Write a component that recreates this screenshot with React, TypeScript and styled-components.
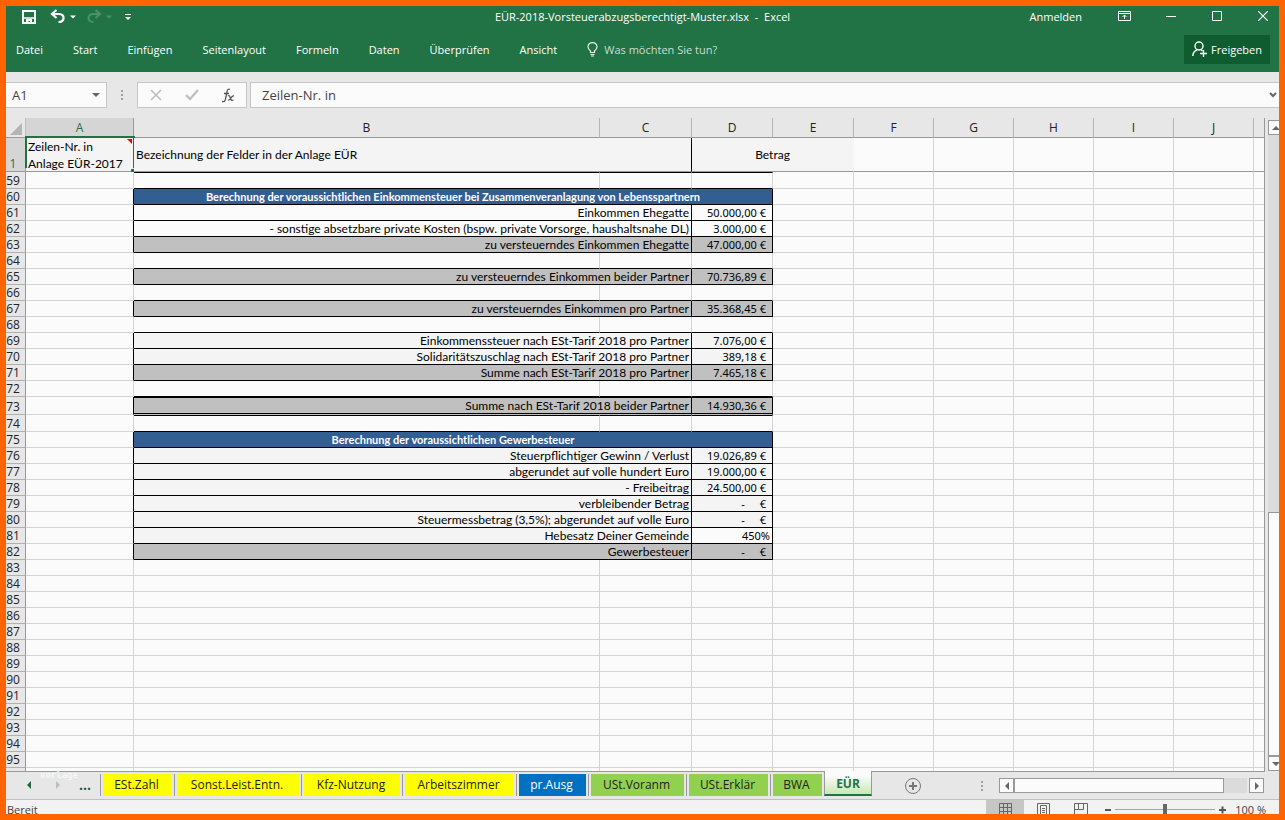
import React from "react";
import styled, { createGlobalStyle } from "styled-components";

const ui = `"Open Sans", "Noto Sans", sans-serif`;
const cellFont = `Lato, "Noto Sans", sans-serif`;
const amountFont = `"Noto Sans", "Open Sans", sans-serif`;
const green = "#217346";

const GlobalStyle = createGlobalStyle`
  * { box-sizing: border-box; }
  body { margin: 0; background: #ff6400; font-family: ${ui}; font-size: 12px; color: #000; }
  button, input { font: inherit; color: inherit; }
  button { border: 0; padding: 0; background: none; }
`;

const Window = styled.div`
  height: 100vh;
  border: 6px solid #ff6400;
  display: flex;
  flex-direction: column;
  overflow: hidden;
  background: #e7e7e7;
`;

/* Title bar and ribbon */
const Ribbon = styled.header`
  background: ${green};
  color: #fff;
  height: 66px;
  flex: none;
  font-size: 11px;
`;
const TitleBar = styled.div`
  display: grid;
  grid-template-columns: 1fr auto 1fr;
  height: 20px;
  align-items: center;
`;
const QuickAccess = styled.div`
  display: flex;
  align-items: center;
  padding: 2px 0 0 15px;
`;
const IconButton = styled.button<{ $gap?: number }>`
  display: flex;
  align-items: center;
  justify-content: center;
  margin-right: ${(p) => p.$gap ?? 0}px;
  svg { display: block; }
`;
const Title = styled.h1`
  margin: 0;
  font-size: 11px;
  font-weight: 400;
  white-space: pre;
`;
const WindowControls = styled.div`
  display: flex;
  justify-content: flex-end;
  align-items: center;
  padding-right: 11px;
`;
const MenuBar = styled.nav`
  display: flex;
  align-items: center;
  height: 46px;
  padding: 0 9px 0 10px;
  gap: 30px;
`;
const MenuItem = styled.button``;
const TellMe = styled.button`
  display: flex;
  align-items: center;
  gap: 6px;
  color: #c9ddd1;
`;
const Share = styled.button`
  margin-left: auto;
  display: flex;
  align-items: center;
  justify-content: center;
  gap: 4px;
  width: 86px;
  height: 29px;
  background: #0e5c2f;
`;

/* Formula bar */
const FormulaRow = styled.div`
  display: flex;
  flex: none;
  height: 46px;
  padding: 10px 0;
  font-size: 13px;
  color: #444;
`;
const FieldBox = styled.div<{ $width?: number }>`
  display: flex;
  align-items: center;
  ${(p) => (p.$width ? `width: ${p.$width}px; flex: none;` : "flex: 1; min-width: 0;")}
  background: #fbfbfb;
  border: 1px solid #c6c6c6;
`;
const NameBox = styled(FieldBox)`
  border-left: 0;
  padding-right: 6px;
`;
const FormulaBox = styled(FieldBox)`
  border-right: 0;
  padding: 0 2px 0 5px;
  margin-left: 3px;
`;
const TextInput = styled.input`
  flex: 1;
  min-width: 0;
  border: 0;
  outline: 0;
  background: none;
  padding: 0 6px;
`;
const Grip = styled.span`
  width: 30px;
  flex: none;
  display: flex;
  align-items: center;
  justify-content: center;
`;
const FormulaActions = styled(FieldBox)`
  justify-content: space-between;
  padding: 0 11px 0 12px;
`;

/* Sheet */
const SheetArea = styled.main`
  flex: 1;
  min-height: 0;
  display: flex;
`;
const GridPane = styled.div`
  flex: 1;
  min-width: 0;
  overflow: hidden;
  margin-right: 3px;
  border-right: 1px solid #999;
  background: #fbfbfb;
`;
const Grid = styled.table`
  width: 100%;
  table-layout: fixed;
  border-collapse: separate;
  border-spacing: 0;
  font-family: ${cellFont};
  font-size: 12px;
  line-height: 14px;
`;
const Col = styled.col<{ $width?: number }>`
  ${(p) => p.$width && `width: ${p.$width}px;`}
`;
const ColumnHead = styled.th<{ $active?: boolean }>`
  height: 20px;
  padding: 0;
  font: 400 12px/18px ${ui};
  color: ${(p) => (p.$active ? green : "#222")};
  background: ${(p) => (p.$active ? "#d5d5d5" : "#e7e7e7")};
  border-bottom: 1px solid #999;
  border-right: 1px solid;
  border-right-color: ${(p) => (p.$active ? "#999" : "#b5b5b5")};
  &:last-child { border-right: 0; }
`;
const Corner = styled.td`
  padding: 0;
  background: #e7e7e7;
  border-right: 1px solid #c0c0c0;
  border-bottom: 1px solid #999;
  svg { display: block; margin: 3px 0 0 4px; }
`;
const RowHead = styled.th<{ $active?: boolean }>`
  padding: 0 5px 0 0;
  font: 400 12px/14px ${ui};
  text-align: center;
  vertical-align: bottom;
  color: ${(p) => (p.$active ? green : "#222")};
  background: ${(p) => (p.$active ? "#d5d5d5" : "#e7e7e7")};
  border-right: 1px solid #999;
  border-bottom: 1px solid ${(p) => (p.$active ? "#999" : "#b0b0b0")};
`;
const Row = styled.tr<{ $height: number }>`
  height: ${(p) => p.$height}px;
`;

type Fill = "plain" | "soft" | "gray" | "blue";
const fills: Record<Fill, string> = {
  plain: "#fbfbfb",
  soft: "#f4f4f4",
  gray: "#c0c0c0",
  blue: "#335e92",
};
const Cell = styled.td<{
  $fill?: Fill;
  $right?: string;
  $bottom?: string;
  $top?: boolean;
  $doubled?: boolean;
  $align?: string;
}>`
  padding: 0 2px;
  white-space: nowrap;
  background: ${(p) => fills[p.$fill ?? "plain"]};
  text-align: ${(p) => p.$align ?? "left"};
  border-right: 1px solid ${(p) => p.$right ?? "#d4d4d4"};
  border-bottom: 1px solid ${(p) => p.$bottom ?? "#d4d4d4"};
  ${(p) => p.$top && "border-top: 1px solid #000;"}
  ${(p) => p.$doubled && "box-shadow: inset 0 -1px #000;"}
  &:last-child { border-right: 0; }
`;
const TitleCell = styled(Cell)`
  color: #fff;
  font-weight: 700;
  font-size: 11px;
`;
const AmountCell = styled(Cell)<{ $flush?: boolean }>`
  font-family: ${amountFont};
  font-size: 11px;
  padding-right: ${(p) => (p.$flush ? 2 : 6)}px;
`;
const Dash = styled.span`
  margin-right: 15px;
`;
const FrozenCell = styled(Cell)`
  position: relative;
  border-bottom-color: #999;
`;
const Wrapped = styled.div`
  height: 33px;
  line-height: 17px;
`;
const Selection = styled.span`
  position: absolute;
  inset: -2px -2px 3px -1px;
  border: 2px solid ${green};
  border-bottom: 0;
  &::before {
    content: "";
    position: absolute;
    right: 1px;
    top: 1px;
    border-top: 5px solid #e00;
    border-left: 5px solid transparent;
  }
  &::after {
    content: "";
    position: absolute;
    right: -3px;
    bottom: -4px;
    width: 5px;
    height: 3px;
    background: ${green};
  }
`;

/* Scroll bars */
const VScroll = styled.div`
  width: 11px;
  flex: none;
  overflow: hidden;
  display: flex;
  flex-direction: column;
  padding-top: 2px;
`;
const ScrollButton = styled.button`
  width: 15px;
  height: 15px;
  flex: none;
  display: flex;
  align-items: center;
  justify-content: center;
  background: #fbfbfb;
  border: 1px solid #999;
`;
const VTrack = styled.div`
  flex: 1;
  width: 15px;
  display: flex;
  flex-direction: column;
  background: #dbdbdb;
  &::before {
    content: "";
    flex: 378;
  }
`;
const VThumb = styled.div`
  flex: 243;
  background: #fbfbfb;
  border: 1px solid #999;
`;

/* Sheet tabs */
const TabBar = styled.div`
  height: 29px;
  flex: none;
  display: flex;
  border-bottom: 1px solid #c0c0c0;
`;
const TabNav = styled.div`
  position: relative;
  width: 94px;
  display: flex;
  align-items: center;
  padding: 0 0 2px 19px;
  border-top: 1px solid #999;
`;
const Ghost = styled.span`
  position: absolute;
  left: 34px;
  top: -4px;
  font: 700 9px/14px "DejaVu Sans Mono", monospace;
  color: rgba(255, 255, 255, 0.7);
`;
const More = styled.button`
  color: #1c5c38;
  font-weight: 700;
  font-size: 14px;
  line-height: 20px;
`;
const TabSlot = styled.div<{ $width: number }>`
  width: ${(p) => p.$width}px;
  flex: none;
  padding: 2px 2px 3px 0;
  border-top: 1px solid #999;
  display: flex;
  &::before {
    content: "";
    width: 1px;
    margin-right: 2px;
    background: #999;
  }
`;
const SheetTab = styled.button<{ $color: string; $light?: boolean }>`
  flex: 1;
  height: 22px;
  padding: 0 2px 2px 0;
  background: ${(p) => p.$color};
  color: ${(p) => (p.$light ? "#fff" : "#222")};
  font-size: 12px;
  white-space: nowrap;
`;
const ActiveTab = styled.button`
  width: 48px;
  height: 25px;
  flex: none;
  padding-top: 2px;
  border: 1px solid #999;
  border-top: 0;
  border-bottom: 2px solid ${green};
  background: linear-gradient(#fbfbfb 20%, #c9e8b4);
  color: ${green};
  font-weight: 700;
  font-size: 12px;
`;
const TabRest = styled.div`
  flex: 1;
  display: flex;
  align-items: center;
  border-top: 1px solid #999;
  padding-left: 32px;
  margin-right: 14px;
`;
const TabGrip = styled.span`
  margin-left: auto;
  display: flex;
`;
const HScroll = styled.div`
  display: flex;
  width: 265px;
  margin-left: 15px;
  margin-right: 1px;
`;
const HTrack = styled.div`
  flex: 1;
  background: #dbdbdb;
  margin-right: 2px;
`;
const HThumb = styled.div`
  width: 90%;
  height: 15px;
  background: #fbfbfb;
  border: 1px solid #999;
`;

/* Status bar */
const StatusBar = styled.footer`
  height: 14px;
  flex: none;
  overflow: hidden;
  display: flex;
  background: #f2f2f2;
  color: #444;
  font-size: 11px;
  line-height: 12px;
`;
const StatusText = styled.span`
  padding: 4px 1px 0;
`;
const ViewButton = styled.button<{ $on?: boolean }>`
  width: 38px;
  height: 22px;
  display: flex;
  justify-content: center;
  padding-top: 3px;
  background: ${(p) => (p.$on ? "#c6c6c6" : "none")};
`;
const Views = styled.div`
  margin-left: auto;
  display: flex;
`;
const Zoom = styled.div`
  display: flex;
  padding: 4px 13px 0 5px;
  gap: 4px;
`;
const ZoomButton = styled.button`
  height: 12px;
  svg { display: block; }
`;
const ZoomTrack = styled.input`
  appearance: none;
  width: 100px;
  height: 12px;
  margin: 0;
  background: linear-gradient(#a5a5a5, #a5a5a5) 0 5px / 100% 1px no-repeat;
  &::-webkit-slider-thumb {
    appearance: none;
    width: 4px;
    height: 12px;
    background: #666;
  }
`;
const ZoomLevel = styled.span`
  margin-left: 5px;
`;

const Arrow = ({ dir, color = "#666", size = 7 }: { dir: "up" | "down" | "left" | "right"; color?: string; size?: number }) => {
  const d = { up: "M0 6L4 2L8 6Z", down: "M0 2L4 6L8 2Z", left: "M6 0L2 4L6 8Z", right: "M2 0L6 4L2 8Z" }[dir];
  return (
    <svg width={size} height={size} viewBox="0 0 8 8">
      <path d={d} fill={color} />
    </svg>
  );
};
const Dots = () => (
  <svg width="3" height="12" fill="#a0a0a0">
    <rect y="1" width="2" height="2" />
    <rect y="5" width="2" height="2" />
    <rect y="9" width="2" height="2" />
  </svg>
);

interface Line {
  row: number;
  kind: "empty" | "title" | "item";
  label?: string;
  amount?: string;
  fill?: Fill;
  amountFill?: Fill;
  height?: number;
  total?: boolean;
}
const item = (row: number, label: string, amount: string, fill: Fill = "plain", extra: Partial<Line> = {}): Line => ({
  row, kind: "item", label, amount, fill, ...extra,
});
const empty = (row: number, height?: number): Line => ({ row, kind: "empty", height });

const lastRow = 95;
const lines: Line[] = [
  empty(59, 17),
  { row: 60, kind: "title", label: "Berechnung der voraussichtlichen Einkommensteuer bei Zusammenveranlagung von Lebensspartnern" },
  item(61, "Einkommen Ehegatte", "50.000,00 €"),
  item(62, "- sonstige absetzbare private Kosten (bspw. private Vorsorge, haushaltsnahe DL)", "3.000,00 €"),
  item(63, "zu versteuerndes Einkommen Ehegatte", "47.000,00 €", "gray"),
  empty(64),
  item(65, "zu versteuerndes Einkommen beider Partner", "70.736,89 €", "gray"),
  empty(66),
  item(67, "zu versteuerndes Einkommen pro Partner", "35.368,45 €", "gray"),
  empty(68),
  item(69, "Einkommenssteuer nach ESt-Tarif 2018 pro Partner", "7.076,00 €", "soft"),
  item(70, "Solidaritätszuschlag nach ESt-Tarif 2018 pro Partner", "389,18 €", "soft"),
  item(71, "Summe nach ESt-Tarif 2018 pro Partner", "7.465,18 €", "gray"),
  empty(72),
  item(73, "Summe nach ESt-Tarif 2018 beider Partner", "14.930,36 €", "gray", { height: 18, total: true }),
  empty(74, 17),
  { row: 75, kind: "title", label: "Berechnung der voraussichtlichen Gewerbesteuer" },
  item(76, "Steuerpflichtiger Gewinn / Verlust", "19.026,89 €", "soft"),
  item(77, "abgerundet auf volle hundert Euro", "19.000,00 €", "soft"),
  item(78, "- Freibeitrag", "24.500,00 €", "soft"),
  item(79, "verbleibender Betrag", "-", "soft"),
  item(80, "Steuermessbetrag (3,5%); abgerundet auf volle Euro", "-", "soft"),
  item(81, "Hebesatz Deiner Gemeinde", "450%", "soft", { amountFill: "plain" }),
  item(82, "Gewerbesteuer", "-", "gray"),
  ...Array.from({ length: 14 }, (_, i) => empty(83 + i)),
];

const columns = [108, 466, 92, 81, 81, 80, 80, 80, 80, 80];
const letters = ["A", "B", "C", "D", "E", "F", "G", "H", "I", "J", ""];
const black = "#000";

const SheetRow = ({ line, prev, next }: { line: Line; prev?: Line; next?: Line }) => {
  const boxed = line.kind !== "empty";
  const under = boxed || (next && next.kind !== "empty") ? black : undefined;
  const over = !prev || !!prev.total;
  return (
    <Row $height={line.height ?? 16}>
      <RowHead scope="row">{line.row <= lastRow ? line.row : null}</RowHead>
      <Cell $right={boxed ? black : undefined} />
      {line.kind === "empty" && (
        <>
          <Cell $bottom={under} $top={over} />
          <Cell $bottom={under} $top={over} />
          <Cell $bottom={under} $top={over} />
        </>
      )}
      {line.kind === "title" && (
        <TitleCell colSpan={3} $fill="blue" $align="center" $right={black} $bottom={black}>
          {line.label}
        </TitleCell>
      )}
      {line.kind === "item" && (
        <>
          <Cell colSpan={2} $fill={line.fill} $align="right" $right={black} $bottom={line.total ? "#c0c0c0" : black} $top={line.total} $doubled={line.total}>
            {line.label}
          </Cell>
          <AmountCell
            $fill={line.amountFill ?? line.fill}
            $align="right"
            $right={black}
            $bottom={line.total ? "#c0c0c0" : black}
            $top={line.total}
            $doubled={line.total}
            $flush={line.amount?.endsWith("%")}
          >
            {line.amount === "-" ? (
              <>
                <Dash>-</Dash>€
              </>
            ) : (
              line.amount
            )}
          </AmountCell>
        </>
      )}
      {letters.slice(4).map((l) => (
        <Cell key={l} />
      ))}
    </Row>
  );
};

const yellow = "#ffff00";
const lime = "#92d050";
const tabs = [
  { name: "ESt.Zahl", color: yellow, width: 74 },
  { name: "Sonst.Leist.Entn.", color: yellow, width: 127 },
  { name: "Kfz-Nutzung", color: yellow, width: 101 },
  { name: "Arbeitszimmer", color: yellow, width: 114 },
  { name: "pr.Ausg", color: "#0070c0", width: 72, light: true },
  { name: "USt.Voranm", color: lime, width: 98 },
  { name: "USt.Erklär", color: lime, width: 84 },
  { name: "BWA", color: lime, width: 54 },
];

export default function App() {
  return (
    <Window>
      <GlobalStyle />
      <Ribbon>
        <TitleBar>
          <QuickAccess>
            <IconButton $gap={13} aria-label="Speichern">
              <svg width="16" height="16" viewBox="0 0 16 16" fill="none" stroke="#fff" strokeWidth="2">
                <path d="M2 2H14V14H2Z" />
                <path d="M2 9H14" strokeWidth="1.5" />
                <path d="M5 10H11V15H9V12H7.500V15H5Z" fill="#fff" stroke="none" />
              </svg>
            </IconButton>
            <IconButton $gap={4} aria-label="Rückgängig">
              <svg width="16" height="16" viewBox="0 0 16 16" fill="none" stroke="#fff" strokeWidth="2.200">
                <path d="M6.500 1L2 5L6.500 9M2.500 5H9Q14 5.500 13.500 9.500Q13 13 8.500 13" />
              </svg>
            </IconButton>
            <IconButton $gap={10} aria-label="Rückgängig-Liste">
              <Arrow dir="down" color="#fff" size={6} />
            </IconButton>
            <IconButton $gap={4} aria-label="Wiederholen">
              <svg width="16" height="16" viewBox="0 0 16 16" fill="none" stroke="#4d9069" strokeWidth="2">
                <path d="M9.500 1L14 5L9.500 9M13.500 5H7Q2 5.500 2.500 9.500Q3 13 7.500 13" />
              </svg>
            </IconButton>
            <IconButton $gap={13} aria-label="Wiederholen-Liste">
              <Arrow dir="down" color="#4d9069" size={6} />
            </IconButton>
            <IconButton aria-label="Symbolleiste anpassen">
              <svg width="6" height="8" viewBox="0 0 6 8" fill="#fff">
                <path d="M0 1H6V2H0ZM0 4H6L3 7Z" />
              </svg>
            </IconButton>
          </QuickAccess>
          <Title>{"EÜR-2018-Vorsteuerabzugsberechtigt-Muster.xlsx  -  Excel"}</Title>
          <WindowControls>
            <IconButton $gap={36}>Anmelden</IconButton>
            <IconButton $gap={35} aria-label="Menüband-Anzeigeoptionen">
              <svg width="13" height="10" viewBox="0 0 13 10" fill="none" stroke="#fff">
                <path d="M.5 .5H12.500V9.500H.5ZM.5 2.500H12.500M6.500 8V4M4.500 6L6.500 4L8.500 6" />
              </svg>
            </IconButton>
            <IconButton $gap={36} aria-label="Minimieren">
              <svg width="10" height="10"><path d="M0 5.500H10" stroke="#fff" /></svg>
            </IconButton>
            <IconButton $gap={36} aria-label="Maximieren">
              <svg width="10" height="10"><path d="M.5 .5H9.500V9.500H.5Z" stroke="#fff" fill="none" /></svg>
            </IconButton>
            <IconButton aria-label="Schließen">
              <svg width="10" height="10"><path d="M0 0L10 10M10 0L0 10" stroke="#fff" strokeWidth="1.200" /></svg>
            </IconButton>
          </WindowControls>
        </TitleBar>
        <MenuBar>
          {["Datei", "Start", "Einfügen", "Seitenlayout", "Formeln", "Daten", "Überprüfen", "Ansicht"].map((m) => (
            <MenuItem key={m}>{m}</MenuItem>
          ))}
          <TellMe>
            <svg width="11" height="15" viewBox="0 0 11 15" fill="none" stroke="#e4efe8">
              <path d="M3.500 10.500V9Q1 7 1 4.800Q1.300 .7 5.500 .7Q9.700 .7 10 4.800Q10 7 7.500 9V10.500ZM3.500 12.500H7.500M4 14H7" strokeWidth="1.200" />
            </svg>
            Was möchten Sie tun?
          </TellMe>
          <Share>
            <svg width="15" height="16" viewBox="0 0 15 16" fill="none" stroke="#fff" strokeWidth="1.400">
              <circle cx="7" cy="5" r="4" />
              <path d="M.8 15Q1 10.500 5 9M9 9L10.500 10M8 12.500H15M11.500 9V16" />
            </svg>
            Freigeben
          </Share>
        </MenuBar>
      </Ribbon>

      <FormulaRow>
        <NameBox $width={101}>
          <TextInput aria-label="Namenfeld" defaultValue="A1" />
          <IconButton aria-label="Namen anzeigen"><Arrow dir="down" size={8} /></IconButton>
        </NameBox>
        <Grip><Dots /></Grip>
        <FormulaActions $width={110}>
          <IconButton aria-label="Abbrechen">
            <svg width="12" height="12"><path d="M1 1L11 11M11 1L1 11" stroke="#bdbdbd" strokeWidth="1.600" /></svg>
          </IconButton>
          <IconButton aria-label="Eingeben">
            <svg width="14" height="12" fill="none"><path d="M1 6L5 10L13 1" stroke="#c0c0c0" strokeWidth="2.400" /></svg>
          </IconButton>
          <IconButton aria-label="Funktion einfügen">
            <svg width="14" height="15" viewBox="0 0 14 15" fill="none" stroke="#555" strokeWidth="1.300">
              <path d="M9 1.500Q6.500 0 6 4L4.500 11Q4 14.500 1 13.500M3 5.500H8" />
              <path d="M7 8Q8.500 7 9 9L10 11.500Q10.500 13 12.500 12M13 8Q11.500 7.500 10 10Q8.500 12.500 7 12" />
            </svg>
          </IconButton>
        </FormulaActions>
        <FormulaBox>
          <TextInput aria-label="Bearbeitungsleiste" defaultValue="Zeilen-Nr. in" />
          <IconButton aria-label="Bearbeitungsleiste erweitern">
            <svg width="8" height="6" fill="none"><path d="M1 1L4 4L7 1" stroke="#666" strokeWidth="2" /></svg>
          </IconButton>
        </FormulaBox>
      </FormulaRow>

      <SheetArea>
        <GridPane>
          <Grid>
            <colgroup>
              <Col $width={20} />
              {columns.map((w, i) => (
                <Col key={i} $width={w} />
              ))}
              <Col />
            </colgroup>
            <thead>
              <tr>
                <Corner>
                  <svg width="12" height="12"><path d="M12 0V12H0Z" fill="#b5b5b5" /></svg>
                </Corner>
                {letters.map((l) => (
                  <ColumnHead key={l} scope="col" $active={l === "A"}>{l}</ColumnHead>
                ))}
              </tr>
            </thead>
            <tbody>
              <Row $height={34}>
                <RowHead scope="row" $active>1</RowHead>
                <FrozenCell $fill="soft">
                  <Wrapped>
                    Zeilen-Nr. in
                    <br />
                    Anlage EÜR-2017
                  </Wrapped>
                  <Selection />
                </FrozenCell>
                <FrozenCell colSpan={2} $fill="soft" $right={black}>Bezeichnung der Felder in der Anlage EÜR</FrozenCell>
                <FrozenCell colSpan={2} $fill="soft" $align="center" $right="#f4f4f4">Betrag</FrozenCell>
                {letters.slice(5).map((l) => (
                  <FrozenCell key={l} />
                ))}
              </Row>
              {lines.map((line, i) => (
                <SheetRow key={line.row} line={line} prev={lines[i - 1]} next={lines[i + 1]} />
              ))}
            </tbody>
          </Grid>
        </GridPane>
        <VScroll>
          <ScrollButton aria-label="Nach oben"><Arrow dir="up" size={8} /></ScrollButton>
          <VTrack><VThumb /></VTrack>
          <ScrollButton aria-label="Nach unten"><Arrow dir="down" size={8} /></ScrollButton>
        </VScroll>
      </SheetArea>

      <TabBar>
        <TabNav>
          <IconButton $gap={21} aria-label="Vorherige Blätter"><Arrow dir="left" color="#1c6b3c" size={8} /></IconButton>
          <IconButton $gap={17} aria-label="Nächste Blätter"><Arrow dir="right" color="#bdbdbd" size={8} /></IconButton>
          <More aria-label="Weitere Blätter">...</More>
          <Ghost>vorlage</Ghost>
        </TabNav>
        {tabs.map((t) => (
          <TabSlot key={t.name} $width={t.width}>
            <SheetTab $color={t.color} $light={t.light}>{t.name}</SheetTab>
          </TabSlot>
        ))}
        <ActiveTab>EÜR</ActiveTab>
        <TabRest>
          <IconButton aria-label="Neues Blatt">
            <svg width="18" height="18" fill="none" stroke="#777">
              <circle cx="9" cy="9" r="7.500" />
              <path d="M5 9H13M9 5V13" strokeWidth="2" />
            </svg>
          </IconButton>
          <TabGrip><Dots /></TabGrip>
          <HScroll>
            <ScrollButton aria-label="Nach links"><Arrow dir="left" size={8} /></ScrollButton>
            <HTrack><HThumb /></HTrack>
            <ScrollButton aria-label="Nach rechts"><Arrow dir="right" size={8} /></ScrollButton>
          </HScroll>
        </TabRest>
      </TabBar>

      <StatusBar>
        <StatusText>Bereit</StatusText>
        <Views>
          <ViewButton $on aria-label="Normal">
            <svg width="13" height="13" fill="none" stroke="#666"><path d="M.5 .5H12.500V12.500H.5ZM.5 4.500H12.500M.5 8.500H12.500M4.500 .5V12.500M8.500 .5V12.500" /></svg>
          </ViewButton>
          <ViewButton aria-label="Seitenlayout">
            <svg width="13" height="13" fill="none" stroke="#666"><path d="M.5 .5H12.500V12.500H.5ZM3.500 2.500H9.500V11.500H3.500ZM5 5.500H8M5 7.500H8M5 9.500H8" /></svg>
          </ViewButton>
          <ViewButton aria-label="Umbruchvorschau">
            <svg width="14" height="13" fill="none" stroke="#666"><path d="M.5 13V.5H13.500V12.500M4.500 .5V6.500H9.500V.5M.5 6.500H4.500" /></svg>
          </ViewButton>
        </Views>
        <Zoom>
          <ZoomButton aria-label="Verkleinern"><svg width="6" height="12"><path d="M0 6H6" stroke="#555" strokeWidth="2" /></svg></ZoomButton>
          <ZoomTrack type="range" aria-label="Zoom" defaultValue={50} />
          <ZoomButton aria-label="Vergrößern"><svg width="7" height="12"><path d="M0 6H7M3.500 2.500V9.500" stroke="#555" strokeWidth="2" /></svg></ZoomButton>
          <ZoomLevel>100 %</ZoomLevel>
        </Zoom>
      </StatusBar>
    </Window>
  );
}
